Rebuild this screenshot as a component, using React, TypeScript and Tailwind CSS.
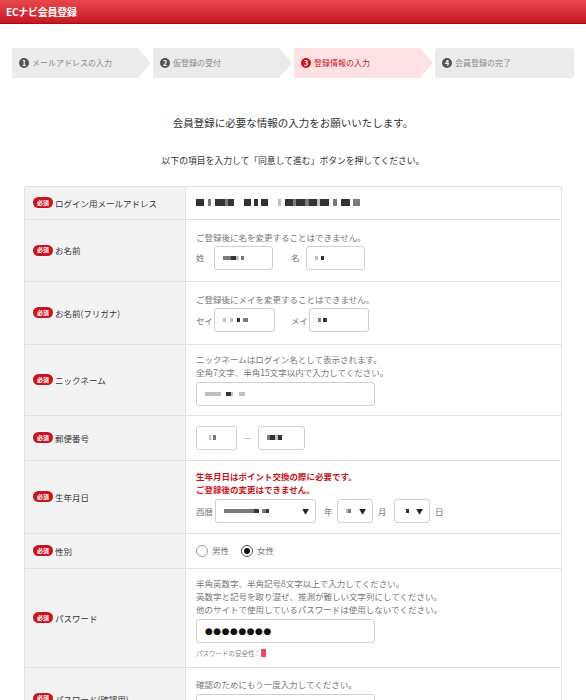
import React from "react"

type Seg = [number, string]

// pixelated placeholder for masked personal data
function Mosaic({ segs, h = 7 }: { segs: Seg[]; h?: number }) {
  return (
    <span className="inline-flex items-center">
      {segs.map(([w, c], i) => (
        <span key={i} style={{ width: w, height: h, background: c }} className="inline-block" />
      ))}
    </span>
  )
}

const D = "#333333"
const M = "#7a7a7a"
const L = "#c0c0c0"
const T = "transparent"

function Badge() {
  return (
    <span className="inline-flex items-center justify-center h-[11px] w-[20px] rounded-full bg-[#c8141c] text-white text-[6px] font-bold leading-none">
      必須
    </span>
  )
}

function Box({ w, children }: { w: string; children?: React.ReactNode }) {
  return (
    <div className={`${w} h-[24px] border border-[#cfcfcf] rounded-[3px] bg-white flex items-center px-[8px]`}>{children}</div>
  )
}

function Select({ w, children }: { w: string; children?: React.ReactNode }) {
  return (
    <div className={`${w} h-[24px] border border-[#cfcfcf] rounded-[3px] bg-white flex items-center justify-between pl-[8px] pr-[6px]`}>
      <span className="flex items-center">{children}</span>
      <span className="text-[7px] text-[#222]">▼</span>
    </div>
  )
}

function Row({ label, h, children }: { label: string; h: string; children: React.ReactNode }) {
  return (
    <div className={`grid grid-cols-[161px_1fr] border-b border-[#e2e2e2] ${h}`}>
      <div className="bg-[#f3f3f3] border-r border-[#e2e2e2] flex items-center gap-[2px] pl-[8px] text-[8.5px] text-[#333]">
        <Badge />
        <span>{label}</span>
      </div>
      <div className="flex flex-col justify-center pl-[10px] text-[8.5px] text-[#777] leading-[13px]">{children}</div>
    </div>
  )
}

function StepNum({ n, active }: { n: number; active?: boolean }) {
  return (
    <span
      className={`inline-flex items-center justify-center w-[10px] h-[10px] rounded-full text-white text-[7px] font-bold leading-none ${
        active ? "bg-[#d0101b]" : "bg-[#555]"
      }`}
    >
      {n}
    </span>
  )
}

export default function App() {
  const steps = ["メールアドレスの入力", "仮登録の受付", "登録情報の入力", "会員登録の完了"]
  return (
    <div className="w-[586px] h-[700px] overflow-hidden bg-white font-['Noto_Sans_CJK_JP','Liberation_Sans',sans-serif]">
      {/* header */}
      <div className="h-[24px] bg-gradient-to-b from-[#e8454d] to-[#c8161f] border-b border-[#9e0e14] flex items-center px-[6px]">
        <span className="text-white text-[10px] font-bold tracking-tight">ECナビ会員登録</span>
      </div>

      {/* steps */}
      <div className="flex gap-[2px] px-[12px] mt-[24px]">
        {steps.map((s, i) => {
          const last = i === steps.length - 1
          const active = i === 2
          return (
            <div
              key={s}
              className={`flex-1 h-[30px] flex items-center gap-[3px] pl-[7px] text-[8px] ${
                active ? "bg-[#fde2e5] text-[#c8141c]" : "bg-[#ebebeb] text-[#8a8a8a]"
              } ${
                last
                  ? "rounded-[3px]"
                  : "[clip-path:polygon(0_0,calc(100%-13px)_0,100%_50%,calc(100%-13px)_100%,0_100%)]"
              }`}
            >
              <StepNum n={i + 1} active={active} />
              <span>{s}</span>
            </div>
          )
        })}
      </div>

      <p className="text-center text-[10.5px] text-[#333] mt-[37px]">会員登録に必要な情報の入力をお願いいたします。</p>
      <p className="text-center text-[8.8px] text-[#333] mt-[23px]">以下の項目を入力して「同意して進む」ボタンを押してください。</p>

      {/* form table */}
      <div className="mx-[24px] mt-[19px] border border-[#e2e2e2] border-b-0 rounded-t-[3px] overflow-hidden">
        <Row label="ログイン用メールアドレス" h="h-[33px]">
          <Mosaic
            segs={[
              [8, D], [4, T], [3, M], [4, T], [10, D], [3, M], [6, D], [10, T], [7, D], [3, T], [4, D], [3, T], [7, D],
              [10, T], [3, L], [4, T], [8, D], [3, M], [9, D], [4, M], [8, D], [3, L], [9, D], [4, T], [4, M], [4, T],
              [9, D], [3, T], [7, M],
            ]}
          />
        </Row>

        <Row label="お名前" h="h-[62px]">
          <span>ご登録後に名を変更することはできません。</span>
          <div className="flex items-center mt-[2px]">
            <span className="w-[18px]">姓</span>
            <Box w="w-[59px]">
              <Mosaic h={4} segs={[[8, M], [5, D], [3, L], [2, T], [3, M]]} />
            </Box>
            <span className="ml-[18px] w-[15px]">名</span>
            <Box w="w-[59px]">
              <Mosaic h={4} segs={[[3, L], [3, T], [3, D]]} />
            </Box>
          </div>
        </Row>

        <Row label="お名前(フリガナ)" h="h-[63px]">
          <span>ご登録後にメイを変更することはできません。</span>
          <div className="flex items-center mt-[2px]">
            <span className="w-[18px]">セイ</span>
            <Box w="w-[61px]">
              <Mosaic h={4} segs={[[3, L], [4, T], [3, L], [4, T], [3, D], [3, T], [5, M]]} />
            </Box>
            <span className="ml-[16px] w-[18px]">メイ</span>
            <Box w="w-[60px]">
              <Mosaic h={4} segs={[[3, M], [2, T], [4, D]]} />
            </Box>
          </div>
        </Row>

        <Row label="ニックネーム" h="h-[71px]">
          <span>ニックネームはログイン名として表示されます。</span>
          <span>全角7文字、半角15文字以内で入力してください。</span>
          <div className="mt-[3px]">
            <Box w="w-[179px]">
              <Mosaic h={4} segs={[[16, L], [5, T], [5, D], [2, L], [6, T], [6, L]]} />
            </Box>
          </div>
        </Row>

        <Row label="郵便番号" h="h-[45px]">
          <div className="flex items-center">
            <Box w="w-[41px]">
              <Mosaic h={5} segs={[[4, T], [2, L], [2, T], [3, M]]} />
            </Box>
            <span className="w-[21px] text-center text-[#999]">—</span>
            <Box w="w-[47px]">
              <Mosaic h={5} segs={[[3, M], [5, D], [3, L], [4, D]]} />
            </Box>
          </div>
        </Row>

        <Row label="生年月日" h="h-[73px]">
          <span className="text-[#c8141c] font-bold">生年月日はポイント交換の際に必要です。</span>
          <span className="text-[#c8141c] font-bold">ご登録後の変更はできません。</span>
          <div className="flex items-center mt-[3px]">
            <span className="w-[19px]">西暦</span>
            <Select w="w-[101px]">
              <Mosaic h={4} segs={[[30, M], [5, D], [3, T], [4, M], [3, D]]} />
            </Select>
            <span className="ml-[8px] w-[13px]">年</span>
            <Select w="w-[36px]">
              <Mosaic h={4} segs={[[2, L], [3, M]]} />
            </Select>
            <span className="ml-[5px] w-[16px]">月</span>
            <Select w="w-[36px]">
              <Mosaic h={4} segs={[[3, T], [3, D]]} />
            </Select>
            <span className="ml-[5px]">日</span>
          </div>
        </Row>

        <Row label="性別" h="h-[35px]">
          <div className="flex items-center">
            <span className="w-[12px] h-[12px] rounded-full border border-[#999] bg-white" />
            <span className="ml-[4px]">男性</span>
            <span className="ml-[12px] w-[12px] h-[12px] rounded-full border border-[#555] bg-white flex items-center justify-center">
              <span className="w-[6px] h-[6px] rounded-full bg-[#111]" />
            </span>
            <span className="ml-[4px]">女性</span>
          </div>
        </Row>

        <Row label="パスワード" h="h-[99px]">
          <span>半角英数字、半角記号8文字以上で入力してください。</span>
          <span>英数字と記号を取り混ぜ、推測が難しい文字列にしてください。</span>
          <span>他のサイトで使用しているパスワードは使用しないでください。</span>
          <div className="mt-[3px]">
            <Box w="w-[179px]">
              <span className="text-[9px] text-[#111] tracking-[0.5px] font-['DejaVu_Sans',sans-serif]">●●●●●●●●</span>
            </Box>
          </div>
          <div className="flex items-center mt-[5px] text-[6.5px] leading-[10px] text-[#888]">
            <span>パスワードの安全性：</span>
            <span className="w-[5px] h-[8px] bg-[#e0505a]" />
          </div>
        </Row>

        <div className="grid grid-cols-[161px_1fr] h-[60px]">
          <div className="bg-[#f3f3f3] border-r border-[#e2e2e2] flex items-start pt-[25px] gap-[2px] pl-[8px] text-[8.5px] text-[#333]">
            <Badge />
            <span>パスワード(確認用)</span>
          </div>
          <div className="flex flex-col pt-[10px] pl-[10px] text-[8.5px] text-[#777] leading-[13px]">
            <span>確認のためにもう一度入力してください。</span>
            <div className="mt-[3px]">
              <Box w="w-[179px]" />
            </div>
          </div>
        </div>
      </div>
    </div>
  )
}
